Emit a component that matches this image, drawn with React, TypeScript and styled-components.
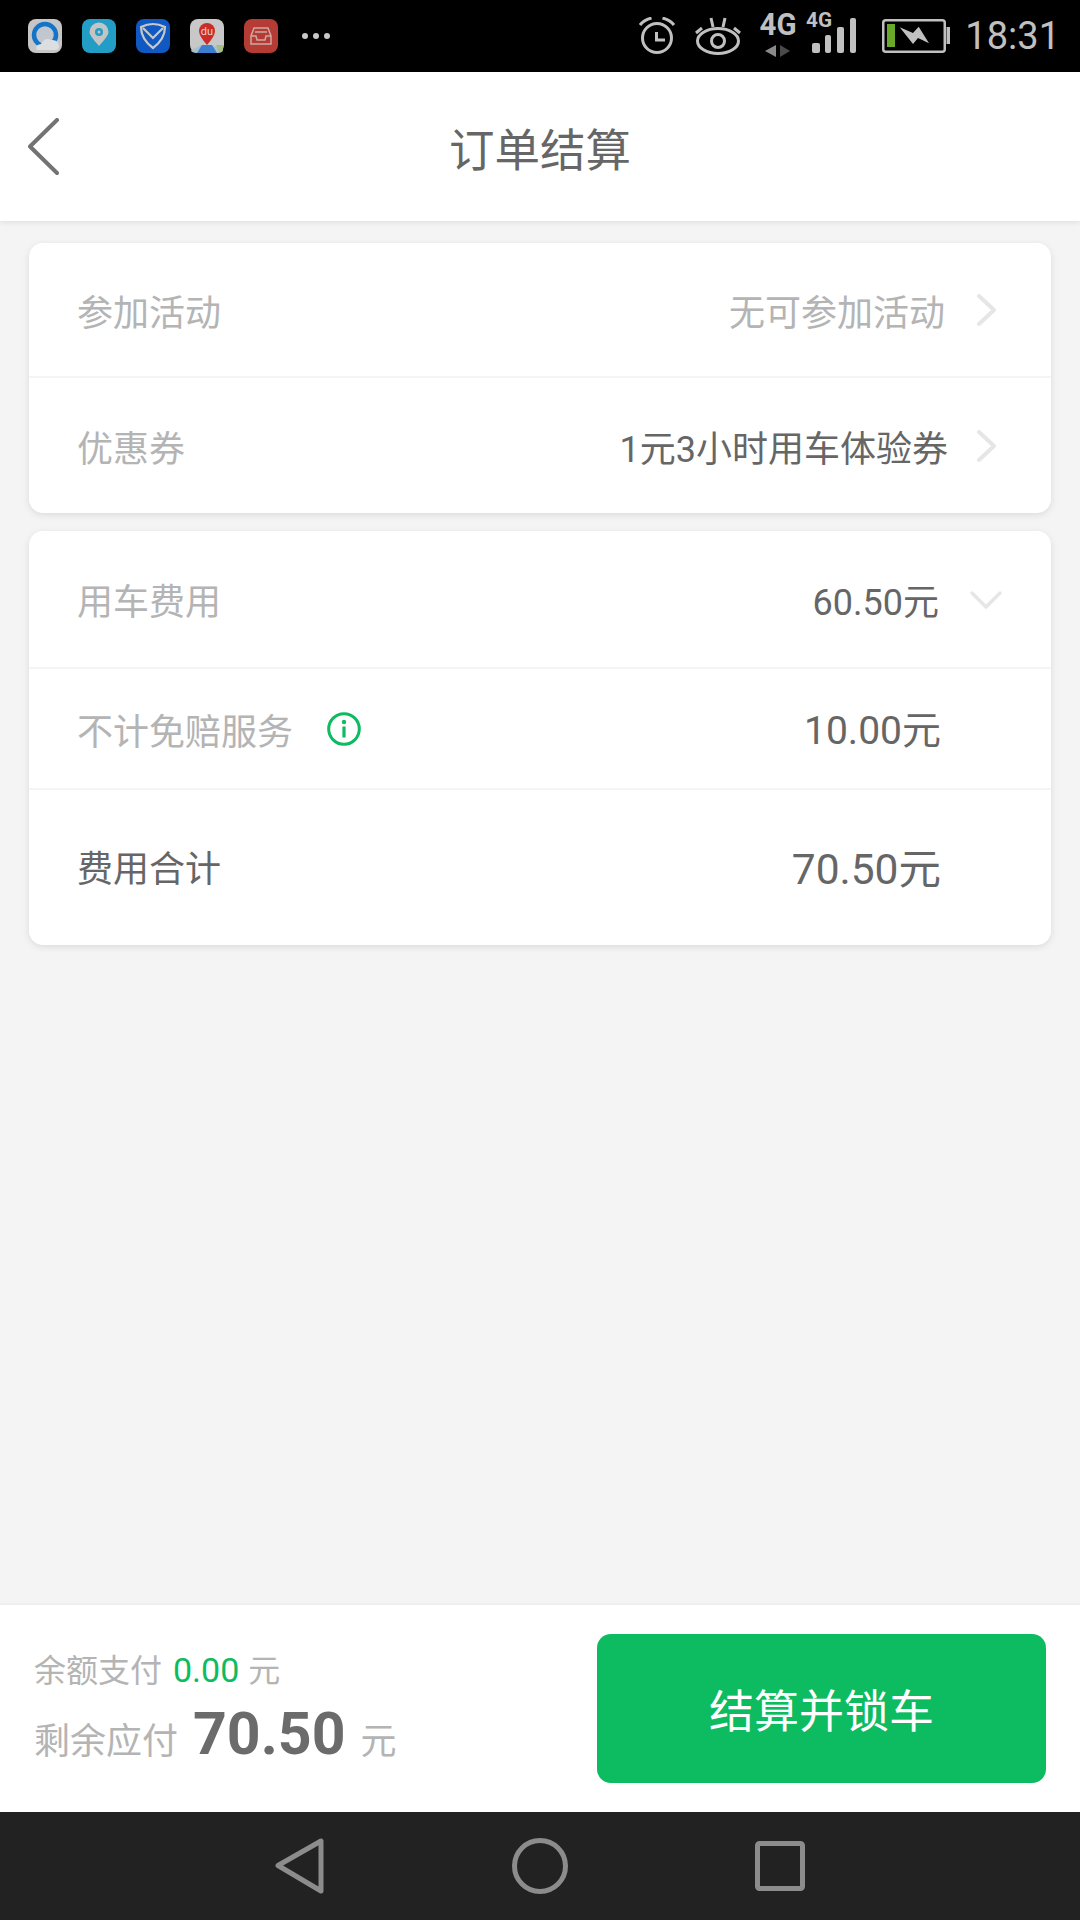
import { FC } from "react";
import styled, { createGlobalStyle } from "styled-components";

const GlobalStyle = createGlobalStyle`
  html, body {
    margin: 0;
    padding: 0;
    background: #f4f4f4;
  }
  * {
    box-sizing: border-box;
  }
`;

const Chevron: FC = () => (
  <ChevronIcon width="20" height="34" viewBox="0 0 20 34">
    <path d="M2 3 L17 17 L2 31" fill="none" stroke="#e6e6e6" strokeWidth="4" strokeLinecap="round" strokeLinejoin="round" />
  </ChevronIcon>
);

const NotifyIcons: FC = () => (
  <NotifyGroup>
    <svg width="34" height="34" viewBox="0 0 34 34">
      <rect width="34" height="34" rx="8" fill="#c6c6c6" />
      <circle cx="17" cy="16" r="11" fill="#c2c6ce" stroke="#1474c8" strokeWidth="4.500" />
      <path d="M9 31 Q6 26 13 25 Q17 18 23 21 Q30 20 31 27 Q31 31 27 31 Z" fill="#dcdfe2" />
    </svg>
    <svg width="34" height="34" viewBox="0 0 34 34">
      <rect width="34" height="34" rx="8" fill="#229dc6" />
      <path d="M17 27 Q7 16 7.500 13 A9.500 9.500 0 0 1 26.500 13 Q27 16 17 27 Z" fill="#c4c4c4" />
      <circle cx="17" cy="13" r="4" fill="#229dc6" />
      <circle cx="17" cy="13" r="1.500" fill="#c4c4c4" />
    </svg>
    <svg width="34" height="34" viewBox="0 0 34 34">
      <rect width="34" height="34" rx="8" fill="#1059c2" />
      <path d="M17 5 Q23 5 29 8 Q29 20 17 29 Q5 20 5 8 Q11 5 17 5 Z" fill="none" stroke="#c8c8c8" strokeWidth="2.200" />
      <path d="M7 9 L17 19 L27 9" fill="none" stroke="#c8c8c8" strokeWidth="2.200" />
    </svg>
    <svg width="34" height="34" viewBox="0 0 34 34">
      <rect width="34" height="34" rx="8" fill="#c8c8c8" />
      <path d="M1 31 L12 26 L22 26 L33 31 Q33 34 26 34 L8 34 Q1 34 1 31 Z" fill="#a9bfc9" />
      <path d="M12 26 L22 26 L27 34 L7 34 Z" fill="#3c7fd0" />
      <path d="M26 26 L33 26 L33 29 Q33 34 29 33 Z" fill="#a6c07c" />
      <path d="M17 26 Q9 17 9 12 A8 8 0 0 1 25 12 Q25 17 17 26 Z" fill="#cc2c28" />
      <DuLabel x="17" y="16" textAnchor="middle">du</DuLabel>
    </svg>
    <svg width="34" height="34" viewBox="0 0 34 34">
      <rect width="34" height="34" rx="8" fill="#b43c34" />
      <path d="M10 9 H24 L27 17 V25 H7 V17 Z M7 17 H12 L13 21 H21 L22 17 H27 M11 13 H23" fill="none" stroke="#d0a8a4" strokeWidth="1.500" />
    </svg>
    <Dots>
      <Dot />
      <Dot />
      <Dot />
    </Dots>
  </NotifyGroup>
);

const SystemIcons: FC = () => (
  <SystemGroup>
    <StatusIcon width="38" height="38" viewBox="0 0 38 38">
      <circle cx="19" cy="21" r="14.500" fill="none" stroke="#c0c0c0" strokeWidth="3" />
      <path d="M18.500 15 V23 H27" fill="none" stroke="#c0c0c0" strokeWidth="3" />
      <path d="M2 8 Q6 3 13.500 1 M36 8 Q32 3 24.500 1" fill="none" stroke="#c0c0c0" strokeWidth="3" />
    </StatusIcon>
    <StatusIcon $gap={19} width="46" height="38" viewBox="0 0 46 38">
      <ellipse cx="23" cy="24" rx="20.500" ry="12.500" fill="none" stroke="#c0c0c0" strokeWidth="3" />
      <circle cx="23" cy="24" r="6.500" fill="none" stroke="#c0c0c0" strokeWidth="3" />
      <path d="M1 16 L7 11 M16 1 L18 10 M30 1 L28 10 M45 16 L39 11" fill="none" stroke="#c0c0c0" strokeWidth="3" />
    </StatusIcon>
    <StatusIcon $gap={17} width="40" height="60" viewBox="0 0 40 60">
      <NetLabel x="20" y="29" textAnchor="middle" textLength="37" lengthAdjust="spacingAndGlyphs">4G</NetLabel>
      <path d="M18 39 V51 L7 45 Z" fill="#8a8a8a" />
      <path d="M22 39 V51 L32 45 Z" fill="#4a4a4a" />
    </StatusIcon>
    <StatusIcon $gap={8} width="50" height="60" viewBox="0 0 50 60">
      <NetLabelSmall x="13" y="21" textAnchor="middle" textLength="26" lengthAdjust="spacingAndGlyphs">4G</NetLabelSmall>
      <rect x="6" y="37" width="8" height="10" rx="2" fill="#c0c0c0" />
      <rect x="19" y="29" width="6" height="18" rx="2" fill="#c0c0c0" />
      <rect x="31" y="21" width="7" height="26" rx="2" fill="#c0c0c0" />
      <rect x="44" y="12" width="6" height="35" rx="2" fill="#c0c0c0" />
    </StatusIcon>
    <StatusIcon $gap={26} width="68" height="34" viewBox="0 0 68 34">
      <rect x="1.250" y="1.250" width="61.500" height="31.500" rx="2.500" fill="none" stroke="#c0c0c0" strokeWidth="2.500" />
      <rect x="64.500" y="8" width="3.500" height="17" fill="#c0c0c0" />
      <rect x="5" y="5" width="8" height="23" fill="#6aa82c" />
      <path d="M17.700 8.300 L31 14 L36.700 7.700 L47 24.300 L36 19 L31 25 Z" fill="#c0c0c0" />
    </StatusIcon>
    <Clock>18:31</Clock>
  </SystemGroup>
);

export default function App() {
  return (
    <Page>
      <GlobalStyle />
      <StatusBar>
        <NotifyIcons />
        <SystemIcons />
      </StatusBar>
      <Header>
        <BackIcon width="32" height="58" viewBox="0 0 32 58">
          <path d="M29 2 L2 28.500 L29 55" fill="none" stroke="#737373" strokeWidth="4" strokeLinecap="round" strokeLinejoin="round" />
        </BackIcon>
        <Title>订单结算</Title>
      </Header>
      <Content>
        <Card>
          <Row $height={135}>
            <Label>参加活动</Label>
            <RowEnd>
              <Value $muted $inset={4}>无可参加活动</Value>
              <Chevron />
            </RowEnd>
          </Row>
          <Row $height={135} $last>
            <Label>优惠券</Label>
            <RowEnd>
              <Value $inset={1}>1元3小时用车体验券</Value>
              <Chevron />
            </RowEnd>
          </Row>
        </Card>
        <Card>
          <Row $height={138}>
            <Label>用车费用</Label>
            <RowEnd>
              <Value>60.50元</Value>
              <ExpandIcon width="34" height="20" viewBox="0 0 34 20">
                <path d="M3 3 L17 17 L31 3" fill="none" stroke="#e6e6e6" strokeWidth="3.500" strokeLinecap="round" strokeLinejoin="round" />
              </ExpandIcon>
            </RowEnd>
          </Row>
          <Row $height={121}>
            <LabelGroup>
              <Label>不计免赔服务</Label>
              <svg width="34" height="34" viewBox="0 0 34 34">
                <circle cx="17" cy="17" r="15.300" fill="none" stroke="#0dbb60" strokeWidth="3" />
                <circle cx="17" cy="10" r="2.200" fill="#0dbb60" />
                <rect x="15.400" y="14.500" width="3.200" height="11" fill="#0dbb60" />
              </svg>
            </LabelGroup>
            <Value $size={39} $inset={110} $lift={4}>10.00元</Value>
          </Row>
          <Row $height={155} $last $lift={4}>
            <Label $strong>费用合计</Label>
            <Value $size={42.500} $inset={110}>70.50元</Value>
          </Row>
        </Card>
      </Content>
      <Footer>
        <Summary>
          <BalanceLine>
            余额支付<Balance>0.00</Balance>元
          </BalanceLine>
          <DueLine>
            剩余应付<DueAmount>70.50</DueAmount>元
          </DueLine>
        </Summary>
        <PayButton>结算并锁车</PayButton>
      </Footer>
      <NavBar>
        <svg width="50" height="58" viewBox="0 0 50 58">
          <path d="M46 4 V54 L3 28.500 Z" fill="none" stroke="#8c8c8c" strokeWidth="5" strokeLinejoin="round" />
        </svg>
        <svg width="56" height="56" viewBox="0 0 56 56">
          <circle cx="28" cy="28" r="25.500" fill="none" stroke="#8c8c8c" strokeWidth="5" />
        </svg>
        <svg width="50" height="50" viewBox="0 0 50 50">
          <rect x="2.500" y="2.500" width="45" height="45" rx="2" fill="none" stroke="#8c8c8c" strokeWidth="5" />
        </svg>
      </NavBar>
    </Page>
  );
}

const Page = styled.div`
  width: 1080px;
  height: 1920px;
  display: flex;
  flex-direction: column;
  overflow: hidden;
  background: #f4f4f4;
  font-family: Roboto, "Noto Sans CJK SC", sans-serif;
`;
const StatusBar = styled.div`
  height: 72px;
  flex-shrink: 0;
  display: flex;
  align-items: center;
  justify-content: space-between;
  padding: 0 20px 0 28px;
  background: #000;
`;
const NotifyGroup = styled.div`
  display: flex;
  align-items: center;
  gap: 20px;
`;
const DuLabel = styled.text`
  font-family: Roboto, sans-serif;
  font-size: 11px;
  fill: #e8d0d0;
`;
const Dots = styled.div`
  display: flex;
  gap: 5px;
  margin-left: 4px;
`;
const Dot = styled.span`
  width: 6px;
  height: 6px;
  border-radius: 50%;
  background: #c8c8c8;
`;
const SystemGroup = styled.div`
  display: flex;
  align-items: center;
`;
const StatusIcon = styled.svg<{ $gap?: number }>`
  margin-left: ${(p) => p.$gap ?? 0}px;
`;
const NetLabel = styled.text`
  font-family: Roboto, sans-serif;
  font-weight: 700;
  font-size: 31px;
  fill: #c0c0c0;
`;
const NetLabelSmall = styled.text`
  font-family: Roboto, sans-serif;
  font-weight: 700;
  font-size: 20px;
  fill: #c0c0c0;
`;
const Clock = styled.span`
  margin-left: 15px;
  font-family: Roboto, sans-serif;
  font-size: 38px;
  color: #c0c0c0;
`;
const Header = styled.div`
  position: relative;
  z-index: 1;
  height: 149px;
  flex-shrink: 0;
  display: flex;
  align-items: center;
  justify-content: center;
  background: #fff;
  box-shadow: 0 1px 6px rgba(0, 0, 0, 0.1);
`;
const BackIcon = styled.svg`
  position: absolute;
  left: 28px;
  top: 46px;
`;
const Title = styled.h1`
  margin: 0;
  font-size: 45.500px;
  font-weight: 400;
  color: #666;
`;
const Content = styled.div`
  flex: 1;
  display: flex;
  flex-direction: column;
  gap: 18px;
  padding: 22px 29px 0;
`;
const Card = styled.div`
  background: #fff;
  border-radius: 14px;
  box-shadow: 0 2px 7px rgba(0, 0, 0, 0.1);
`;
const Row = styled.div<{ $height: number; $last?: boolean; $lift?: number }>`
  height: ${(p) => p.$height}px;
  display: flex;
  align-items: center;
  justify-content: space-between;
  padding-left: 48px;
  padding-bottom: ${(p) => p.$lift ?? 0}px;
  border-bottom: ${(p) => (p.$last ? "none" : "2px solid #f5f5f5")};
`;
const Label = styled.span<{ $strong?: boolean }>`
  font-size: 36px;
  color: ${(p) => (p.$strong ? "#666" : "#b4b4b4")};
`;
const LabelGroup = styled.div`
  display: flex;
  align-items: center;
  gap: 34px;
`;
const RowEnd = styled.div`
  display: flex;
  align-items: center;
`;
const Value = styled.span<{ $muted?: boolean; $size?: number; $inset?: number; $lift?: number }>`
  font-size: ${(p) => p.$size ?? 36}px;
  color: ${(p) => (p.$muted ? "#b4b4b4" : "#666")};
  margin-right: ${(p) => p.$inset ?? 0}px;
  margin-bottom: ${(p) => p.$lift ?? 0}px;
`;
const ChevronIcon = styled.svg`
  margin: 0 54px 0 28px;
`;
const ExpandIcon = styled.svg`
  margin: 2px 48px 0 30px;
`;
const Footer = styled.div`
  height: 209px;
  flex-shrink: 0;
  display: flex;
  align-items: center;
  justify-content: space-between;
  padding: 0 34px;
  background: #fff;
  border-top: 2px solid #efefef;
`;
const Summary = styled.div`
  display: flex;
  flex-direction: column;
  gap: 8px;
  padding-bottom: 4px;
`;
const BalanceLine = styled.div`
  font-size: 32px;
  color: #b4b4b4;
`;
const Balance = styled.span`
  margin: 0 9px 0 11px;
  font-size: 34px;
  color: #0dbb60;
`;
const DueLine = styled.div`
  display: flex;
  align-items: baseline;
  font-size: 36px;
  color: #b4b4b4;
`;
const DueAmount = styled.span`
  margin: 0 15px;
  font-size: 59px;
  font-weight: 700;
  color: #6b6b6b;
`;
const PayButton = styled.button`
  width: 449px;
  height: 149px;
  border: none;
  border-radius: 14px;
  background: #0dbb60;
  color: #fff;
  font-family: inherit;
  font-size: 45px;
`;
const NavBar = styled.div`
  height: 108px;
  flex-shrink: 0;
  display: flex;
  align-items: center;
  justify-content: center;
  gap: 187px;
  background: #222;
`;
